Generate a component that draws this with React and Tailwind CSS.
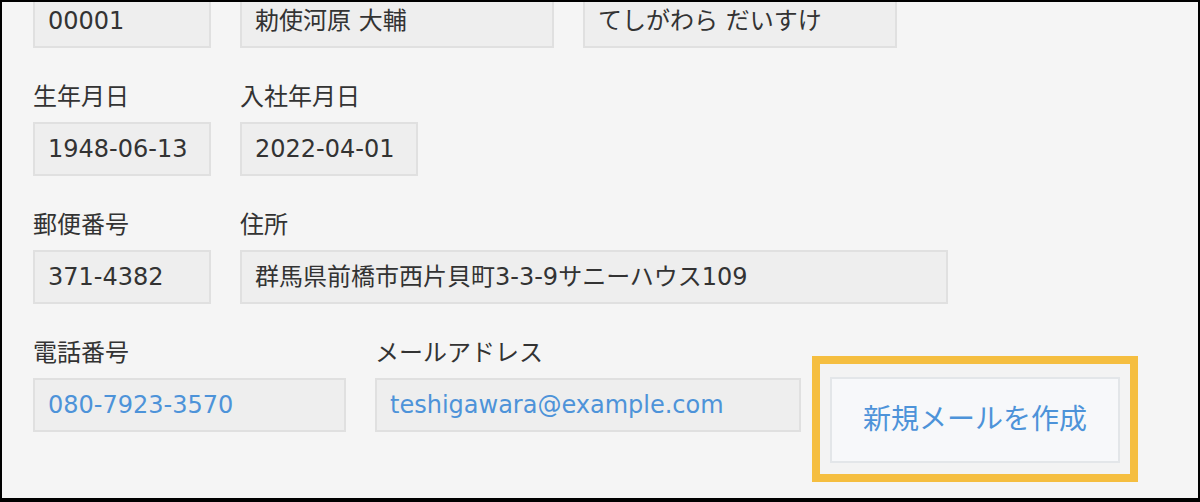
import React from 'react';

// --- Field pieces ---

const Box = ({ width, children, link = false }) => (
    <div
        className={`h-[54px] ${width} flex items-center pl-[13px] border-2 border-[#e0e0e0] bg-[#eeeeee] text-[24px] whitespace-nowrap ${link ? 'text-[#4d93d9]' : 'text-[#333333]'}`}
    >
        {children}
    </div>
);

const Field = ({ label, width, value, link }) => (
    <div className="flex flex-col">
        <div className="h-[31px] leading-[31px] mb-[9px] text-[24px] text-[#333333] whitespace-nowrap">{label}</div>
        <Box width={width} link={link}>{value}</Box>
    </div>
);

// --- Main App Component ---

function App() {
    return (
        <div className="w-[1200px] h-[502px] overflow-hidden bg-[#f5f5f5] border-black border-t-2 border-x-2 border-b-4 font-['DejaVu_Sans','Noto_Sans_CJK_JP',sans-serif]">
            <div className="-mt-[8px] pl-[31px] flex flex-col gap-[34px]">
                {/* --- Row 1 (top cut off) --- */}
                <div className="flex gap-[29px]">
                    <Box width="w-[178px]">00001</Box>
                    <Box width="w-[314px]">勅使河原 大輔</Box>
                    <Box width="w-[314px]">てしがわら だいすけ</Box>
                </div>

                {/* --- Row 2 --- */}
                <div className="flex gap-[29px]">
                    <Field label="生年月日" width="w-[178px]" value="1948-06-13" />
                    <Field label="入社年月日" width="w-[178px]" value="2022-04-01" />
                </div>

                {/* --- Row 3 --- */}
                <div className="flex gap-[29px]">
                    <Field label="郵便番号" width="w-[178px]" value="371-4382" />
                    <Field label="住所" width="w-[708px]" value="群馬県前橋市西片貝町3-3-9サニーハウス109" />
                </div>

                {/* --- Row 4 --- */}
                <div className="flex items-start">
                    <div className="flex gap-[29px]">
                        <Field label="電話番号" width="w-[313px]" value="080-7923-3570" link />
                        <Field label="メールアドレス" width="w-[426px]" value="teshigawara@example.com" link />
                    </div>
                    <div className="ml-[11px] mt-[18px] border-8 border-[#f5be40] bg-[#f3f3f3] pt-[13px] pb-[11px] px-[10px]">
                        <button className="w-[290px] h-[86px] border-2 border-[#e3e6e9] bg-[#f7f8fa] text-[28px] text-[#4d93d9] flex items-center justify-center">
                            新規メールを作成
                        </button>
                    </div>
                </div>
            </div>
        </div>
    );
}

export default App;
